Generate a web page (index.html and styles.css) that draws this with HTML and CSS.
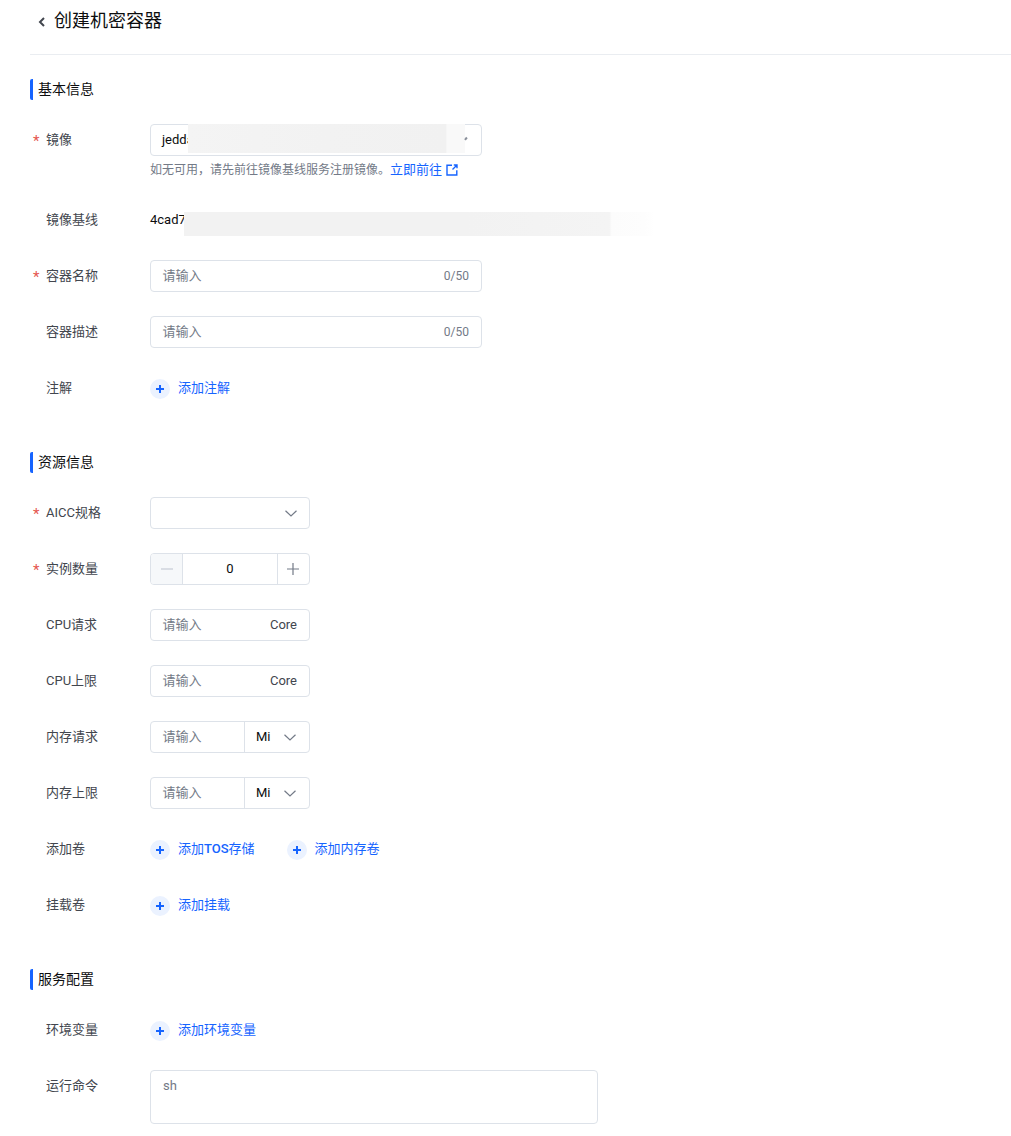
FILE: index.html
```html
<!DOCTYPE html>
<html lang="zh-CN">
<head>
<meta charset="utf-8">
<title>创建机密容器</title>
<link rel="stylesheet" href="styles.css">
</head>
<body>
<header class="page-head">
  <svg class="back" width="8" height="10" viewBox="0 0 8 10"><path d="M6 1 2 5l4 4" fill="none" stroke="#42464e" stroke-width="2"/></svg>
  <h1>创建机密容器</h1>
</header>
<main class="form">
  <section class="section">
    <h2 class="section-title">基本信息</h2>
    <div class="row row-help">
      <label class="label req">镜像</label>
      <div class="control">
        <div class="box w332 select-box">
          <span class="value">jedda</span>
          <span class="mask mask-image"></span>
          <span class="tick"></span>
        </div>
        <p class="help">如无可用，请先前往镜像基线服务注册镜像。<a class="link">立即前往</a>
          <svg class="ext" width="12" height="12" viewBox="0 0 12 12"><path d="M6 1.2H1v9.8h9.8V6.2M6.5 5.5 11 1M7.8 1H11v3.2" fill="none" stroke="#1664ff" stroke-width="1.4"/></svg>
        </p>
      </div>
    </div>
    <div class="row">
      <label class="label">镜像基线</label>
      <div class="control static">
        <span class="value">4cad7</span>
        <span class="mask mask-base"></span>
      </div>
    </div>
    <div class="row">
      <label class="label req">容器名称</label>
      <div class="box w332"><span class="ph">请输入</span><span class="count">0/50</span></div>
    </div>
    <div class="row">
      <label class="label">容器描述</label>
      <div class="box w332"><span class="ph">请输入</span><span class="count">0/50</span></div>
    </div>
    <div class="row">
      <label class="label">注解</label>
      <div class="adds"><a class="add"><span class="plus"></span>添加注解</a></div>
    </div>
  </section>

  <section class="section">
    <h2 class="section-title">资源信息</h2>
    <div class="row">
      <label class="label req">AICC规格</label>
      <div class="box w160 end-box">
        <svg class="chev" width="12" height="7" viewBox="0 0 12 7"><path d="M.5.8 6 6l5.500-5.200" fill="none" stroke="#737a87" stroke-width="1.200"/></svg>
      </div>
    </div>
    <div class="row">
      <label class="label req">实例数量</label>
      <div class="box w160 stepper">
        <span class="step step-minus"><svg width="12" height="12" viewBox="0 0 12 12"><path d="M0 6h12" stroke="#c7ccd6" stroke-width="1.2"/></svg></span>
        <span class="step-value">0</span>
        <span class="step step-plus"><svg width="12" height="12" viewBox="0 0 12 12"><path d="M0 6h12M6 0v12" stroke="#737a87" stroke-width="1.2"/></svg></span>
      </div>
    </div>
    <div class="row">
      <label class="label">CPU请求</label>
      <div class="box w160"><span class="ph">请输入</span><span class="unit">Core</span></div>
    </div>
    <div class="row">
      <label class="label">CPU上限</label>
      <div class="box w160"><span class="ph">请输入</span><span class="unit">Core</span></div>
    </div>
    <div class="row">
      <label class="label">内存请求</label>
      <div class="box w160 split">
        <span class="ph">请输入</span>
        <span class="unit-select"><span class="value">Mi</span><svg class="chev" width="12" height="7" viewBox="0 0 12 7"><path d="M.5.8 6 6l5.500-5.200" fill="none" stroke="#737a87" stroke-width="1.200"/></svg></span>
      </div>
    </div>
    <div class="row">
      <label class="label">内存上限</label>
      <div class="box w160 split">
        <span class="ph">请输入</span>
        <span class="unit-select"><span class="value">Mi</span><svg class="chev" width="12" height="7" viewBox="0 0 12 7"><path d="M.5.8 6 6l5.500-5.200" fill="none" stroke="#737a87" stroke-width="1.200"/></svg></span>
      </div>
    </div>
    <div class="row">
      <label class="label">添加卷</label>
      <div class="adds">
        <a class="add"><span class="plus"></span><span>添加<span class="strong">TOS</span>存储</span></a>
        <a class="add"><span class="plus"></span>添加内存卷</a>
      </div>
    </div>
    <div class="row">
      <label class="label">挂载卷</label>
      <div class="adds"><a class="add"><span class="plus"></span>添加挂载</a></div>
    </div>
  </section>

  <section class="section">
    <h2 class="section-title">服务配置</h2>
    <div class="row">
      <label class="label">环境变量</label>
      <div class="adds"><a class="add"><span class="plus"></span>添加环境变量</a></div>
    </div>
    <div class="row">
      <label class="label">运行命令</label>
      <div class="textarea"><span class="ph">sh</span></div>
    </div>
  </section>
</main>
</body>
</html>
```
FILE: styles.css
```css
* { box-sizing: border-box; }
html, body { margin: 0; padding: 0; background: #fff; }
body {
  width: 1011px;
  height: 1136px;
  overflow: hidden;
  padding-left: 30px;
  font-family: Roboto, "Noto Sans CJK SC", sans-serif;
  font-size: 13px;
  line-height: 20px;
  color: #0c0d0e;
}
.page-head {
  height: 55px;
  display: flex;
  align-items: flex-start;
  padding: 8px 0 0 8px;
  border-bottom: 1px solid #eaedf1;
}
.back { margin: 9px 8px 0 0; flex: none; }
h1 { margin: 0; font-size: 18px; font-weight: 400; line-height: 26px; }
.form { padding-top: 24px; }
.section { margin-bottom: 48px; }
.section-title {
  margin: 0 0 24px;
  height: 21px;
  padding-left: 5px;
  border-left: 3px solid #1664ff;
  border-radius: 2px 0 0 2px;
  font-size: 14px;
  font-weight: 400;
  line-height: 21px;
}
.row {
  display: flex;
  align-items: flex-start;
  min-height: 32px;
  margin-bottom: 24px;
}
.section .row:last-child { margin-bottom: 0; }
.label {
  position: relative;
  width: 120px;
  flex: none;
  padding-left: 16px;
  line-height: 31px;
  color: #42464e;
}
.req::before {
  content: "*";
  position: absolute;
  left: 3px;
  top: 2px;
  color: #e5554f;
  font-size: 15px;
}
.control { position: relative; }
.static { line-height: 32px; width: 600px; height: 32px; }
.box {
  position: relative;
  display: flex;
  align-items: center;
  justify-content: space-between;
  height: 32px;
  padding: 0 12px 0 11.5px;
  border: 1px solid #dde2e9;
  border-radius: 4px;
  background: #fff;
}
.w332 { width: 332px; }
.w160 { width: 160px; }
.select-box { padding-left: 11px; }
.end-box { justify-content: flex-end; padding-right: 12px; }
.ph { color: #737a87; }
.count { color: #737a87; font-size: 12px; }
.unit { color: #42464e; font-size: 13px; }
.value { color: #0c0d0e; }
.help {
  margin: 4px 0 0;
  font-size: 12px;
  line-height: 20px;
  color: #737a87;
  white-space: nowrap;
}
.row-help { min-height: 56px; }
.link { color: #1664ff; font-size: 13px; }
.ext { margin-left: 1px; vertical-align: -2px; }
.mask { position: absolute; pointer-events: none; }
.mask-image {
  left: 37px;
  top: -1px;
  width: 277px;
  height: 29px;
  background: linear-gradient(90deg, #f4f4f4 0, #f2f2f2 50%, #f1f1f1 93%, #f9f9f9 93.5%, #f9f9f9 100%);
}
.mask-base {
  left: 34px;
  top: 8px;
  width: 470px;
  height: 24px;
  background: linear-gradient(90deg, #f2f2f2 0, #f2f2f2 60%, #f4f4f4 90.5%, #fcfcfc 91%, #fdfdfd 98%, #fff 100%);
}
.tick {
  position: absolute;
  right: 15px;
  top: 12px;
  width: 1.5px;
  height: 3px;
  background: #8a909b;
  transform: rotate(40deg);
}
.stepper { padding: 0; }
.step {
  display: flex;
  align-items: center;
  justify-content: center;
  width: 32px;
  height: 30px;
  flex: none;
}
.step-minus { background: #f6f8fa; border-right: 1px solid #dde2e9; border-radius: 3px 0 0 3px; }
.step-plus { border-left: 1px solid #dde2e9; padding-right: 1px; }
.step-value { flex: 1; text-align: center; }
.split { padding: 0 0 0 11.5px; }
.unit-select {
  display: flex;
  align-items: center;
  justify-content: space-between;
  width: 65px;
  height: 30px;
  flex: none;
  padding: 0 13px 0 11px;
  border-left: 1px solid #dde2e9;
}
.adds { display: flex; gap: 32px; height: 32px; }
.add {
  display: flex;
  align-items: flex-start;
  gap: 8px;
  line-height: 31px;
  color: #1664ff;
}
.strong { font-weight: 500; }
.plus {
  position: relative;
  width: 20px;
  height: 20px;
  margin-top: 7px;
  flex: none;
  border-radius: 50%;
  background: #ebf2ff;
}
.plus::before, .plus::after {
  content: "";
  position: absolute;
  background: #1664ff;
}
.plus::before { left: 6px; top: 9px; width: 8px; height: 2px; }
.plus::after { left: 9px; top: 6px; width: 2px; height: 8px; }
.textarea {
  width: 448px;
  height: 54px;
  padding: 5px 12px;
  border: 1px solid #dde2e9;
  border-radius: 4px;
}
```
